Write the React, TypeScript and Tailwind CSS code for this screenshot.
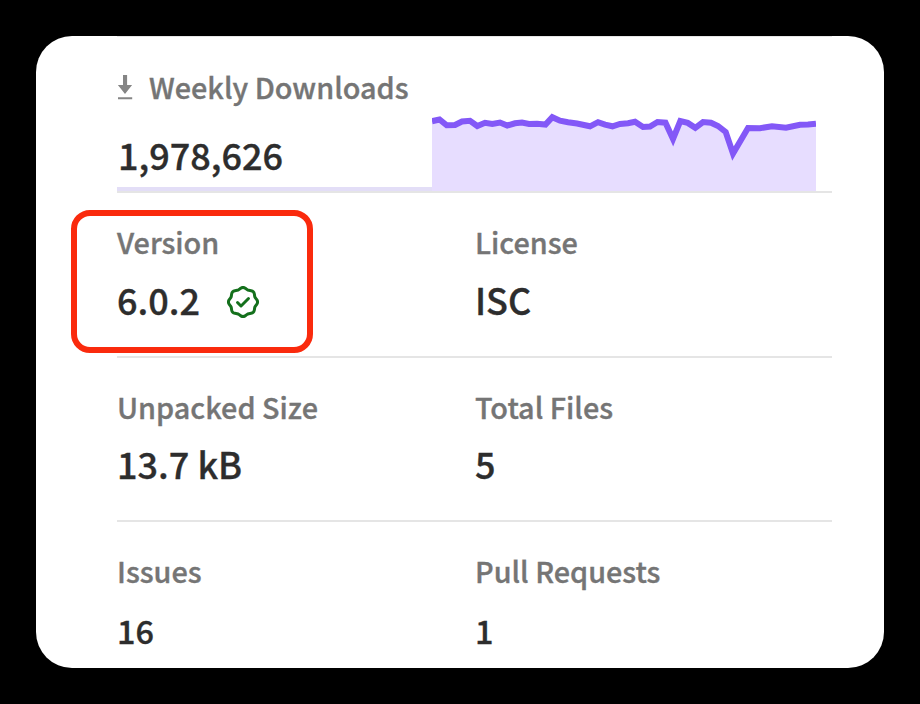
import type { ReactNode } from "react";

const trend: [number, number][] = [
  [432, 121.2], [439.5, 119.5], [446.7, 125.3], [455, 125], [462, 121.5], [470, 120.8],
  [477.3, 126], [485, 122.8], [492.3, 124], [500, 122.5], [507.3, 125.5], [515, 123.3],
  [522, 122.5], [529, 124], [537, 123.7], [545.5, 124.5], [552.3, 117.2], [560, 120.7],
  [568, 122.3], [577, 123.5], [590, 126.3], [598, 122.2], [605, 124.7], [612.5, 126.3],
  [620, 124], [628, 123.2], [635, 121.8], [643, 127], [650, 126.5], [657.5, 122],
  [665.5, 122.7], [673, 139], [680.3, 121], [687.7, 122.9], [695.3, 127.8], [703, 122],
  [711, 122.7], [718, 126], [725.7, 132], [733, 153.5], [748, 128], [760, 128.2],
  [772, 126.2], [786, 127.8], [800, 124.8], [808, 124.6], [816, 123.8],
];
const line = trend.map(([x, y]) => `${x - 432},${y - 101}`).join(" ");

function Label({ children }: { children: ReactNode }) {
  return <h3 className="h-10 whitespace-nowrap text-[28.8px] leading-[42px] text-[#757575]">{children}</h3>;
}

function Stat({ label, value, gap, size = "text-[36px]" }: { label: string; value: ReactNode; gap: string; size?: string }) {
  return (
    <div>
      <Label>{label}</Label>
      <div className={`${gap} ${size} flex h-[50px] items-center whitespace-nowrap leading-[50px] text-[#2d2d2d]`}>{value}</div>
    </div>
  );
}

function DownloadIcon() {
  return (
    <svg className="mr-4 mt-[9px] h-[25px] w-4 shrink-0" viewBox="0 0 16 25" fill="#858585">
      <path d="M6 0h4.1v10h5L8 19 .9 10H6z" />
      <path d="M1 22.2h14.2v2H1z" />
    </svg>
  );
}

function VerifiedIcon() {
  return (
    <svg className="ml-[27px] mt-[5px] h-8 w-8" viewBox="0 0 16 16" fill="#14701c">
      <path d="m9.585.52.929.68c.153.112.331.186.518.215l1.138.175a2.678 2.678 0 0 1 2.24 2.24l.174 1.139c.029.187.103.365.215.518l.68.928a2.677 2.677 0 0 1 0 3.17l-.68.928a1.174 1.174 0 0 0-.215.518l-.175 1.138a2.678 2.678 0 0 1-2.241 2.241l-1.138.175a1.17 1.17 0 0 0-.518.215l-.928.68a2.677 2.677 0 0 1-3.17 0l-.928-.68a1.174 1.174 0 0 0-.518-.215L3.83 14.41a2.678 2.678 0 0 1-2.24-2.24l-.175-1.138a1.17 1.17 0 0 0-.215-.518l-.68-.928a2.677 2.677 0 0 1 0-3.17l.68-.928c.112-.153.186-.331.215-.518l.175-1.14a2.678 2.678 0 0 1 2.24-2.24l1.139-.175c.187-.029.365-.103.518-.215l.928-.68a2.677 2.677 0 0 1 3.17 0ZM7.303 1.728l-.927.68a2.67 2.67 0 0 1-1.18.489l-1.137.174a1.179 1.179 0 0 0-.987.987l-.174 1.136a2.677 2.677 0 0 1-.489 1.18l-.68.928a1.18 1.18 0 0 0 0 1.394l.68.927c.256.348.424.753.489 1.18l.174 1.137c.078.509.478.909.987.987l1.136.174a2.67 2.67 0 0 1 1.18.489l.928.68c.414.305.979.305 1.394 0l.927-.68a2.67 2.67 0 0 1 1.18-.489l1.137-.174a1.18 1.18 0 0 0 .987-.987l.174-1.136a2.67 2.67 0 0 1 .489-1.18l.68-.928a1.176 1.176 0 0 0 0-1.394l-.68-.927a2.686 2.686 0 0 1-.489-1.18l-.174-1.137a1.179 1.179 0 0 0-.987-.987l-1.136-.174a2.677 2.677 0 0 1-1.18-.489l-.928-.68a1.176 1.176 0 0 0-1.394 0Z" fillRule="evenodd" />
      <path d="M11.28 6.78l-3.75 3.75a.75.75 0 0 1-1.06 0L4.72 8.78a.751.751 0 0 1 .018-1.042.751.751 0 0 1 1.042-.018L7 8.94l3.22-3.22a.751.751 0 0 1 1.042.018.751.751 0 0 1 .018 1.042Z" />
    </svg>
  );
}

export default function App() {
  return (
    <div className="h-[704px] w-[920px] bg-black p-9 font-['Noto_Sans_CJK_SC',sans-serif] font-medium [-webkit-text-stroke:0.35px]">
      <main className="relative flex h-[632px] w-[848px] flex-col overflow-hidden rounded-[36px] bg-white pl-[81px] pr-[52px]">
        <section className="flex h-[157px] shrink-0 border-b-2 border-t border-[#e5e5e5]">
          <div className="flex w-[315px] flex-col border-b-4 border-[#e3def7] pt-[29px]">
            <div className="flex">
              <DownloadIcon />
              <Label>Weekly Downloads</Label>
            </div>
            <div className="mt-6 h-12 pl-px text-[36px] leading-[48px] text-[#2d2d2d]">1,978,626</div>
          </div>
          <svg className="mt-16 h-[90px] w-[384px] shrink-0" viewBox="0 0 384 90">
            <polygon points={`0,90 ${line} 384,90`} fill="#e7ddff" />
            <polyline points={line} fill="none" stroke="#8358f7" strokeWidth="6" />
          </svg>
        </section>
        <section className="grid h-[165px] shrink-0 grid-cols-[358px_1fr] border-b-2 border-[#e5e5e5] pt-7">
          <Stat label="Version" value={<>6.0.2<VerifiedIcon /></>} gap="mt-[13px]" />
          <Stat label="License" value="ISC" gap="mt-[13px]" />
        </section>
        <section className="grid h-[164px] shrink-0 grid-cols-[358px_1fr] border-b-2 border-[#e5e5e5] pt-7">
          <Stat label="Unpacked Size" value="13.7 kB" gap="mt-[12px]" />
          <Stat label="Total Files" value="5" gap="mt-[12px]" />
        </section>
        <section className="grid grid-cols-[358px_1fr] pt-7">
          <Stat label="Issues" value="16" gap="mt-[15px]" size="text-[32.4px]" />
          <Stat label="Pull Requests" value="1" gap="mt-[15px]" size="text-[32.4px]" />
        </section>
        <div className="absolute left-[35px] top-[174px] h-[143px] w-[242px] rounded-[19px] border-[6px] border-[#fa2a0d]" />
      </main>
    </div>
  );
}
